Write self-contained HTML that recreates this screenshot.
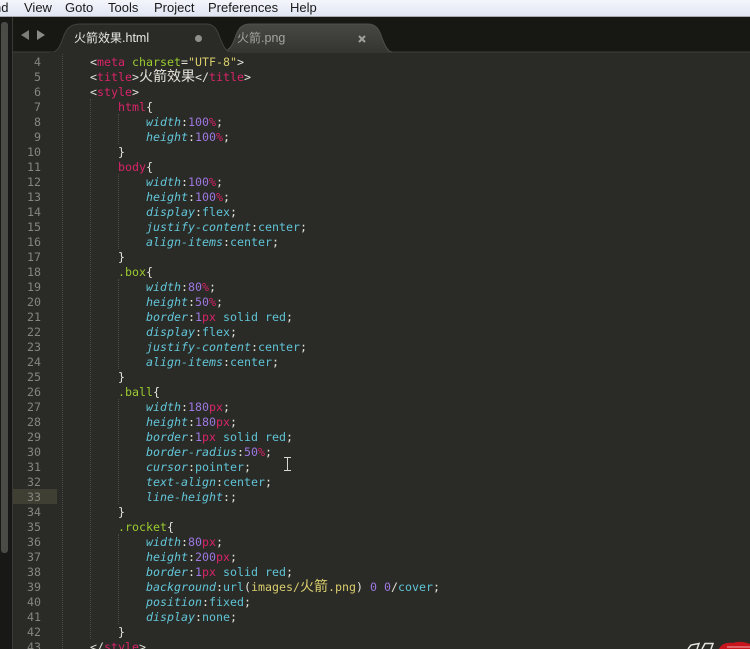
<!DOCTYPE html>
<html><head><meta charset="utf-8">
<style>
html,body{margin:0;padding:0;background:#2a2a26;}
#r{position:relative;width:750px;height:649px;overflow:hidden;background:#2a2a26;font-family:"DejaVu Sans Mono","Noto Sans CJK SC",monospace;}
.m{position:absolute;top:0;height:16px;font:13px/15px "Liberation Sans",sans-serif;color:#1a1a1a;white-space:pre;}
.l{position:absolute;left:0;margin-top:1px;height:15px;line-height:15px;font-size:11.63px;color:#e4e4dc;white-space:pre;}
.n{position:absolute;left:13px;margin-top:1px;width:28px;text-align:right;height:15px;line-height:15px;font-size:11.63px;color:#85867f;}
i{color:#62c6d8;font-style:italic}
b{font-weight:normal;color:#d9246a}
u{text-decoration:none;color:#9acb30}
s{text-decoration:none;color:#9c78e0}
q{quotes:none;color:#d8cd6c}
c{color:#5fc4d6}
em{font-style:normal;font-size:14px;font-family:"Noto Sans CJK SC",sans-serif;line-height:0}
.g{position:absolute;width:0;border-left:1px dotted #4a4a44}
</style></head><body><div id="r">
<div style="position:absolute;left:0;top:0;width:750px;height:17px;background:linear-gradient(#f4f6fb,#dfe4f3)"></div>
<div style="position:absolute;left:0;top:16px;width:750px;height:1px;background:#a9a9b0"></div>
<div class="m" style="left:-6px">nd</div>
<div class="m" style="left:24px">View</div>
<div class="m" style="left:65px">Goto</div>
<div class="m" style="left:108px">Tools</div>
<div class="m" style="left:154px">Project</div>
<div class="m" style="left:208px">Preferences</div>
<div class="m" style="left:290px">Help</div>

<div style="position:absolute;left:0;top:17px;width:13px;height:632px;background:#181816"></div>
<div style="position:absolute;left:1px;top:22px;width:7px;height:531px;background:#4a4a47;border-radius:3px"></div>
<div style="position:absolute;left:12px;top:17px;width:1px;height:632px;background:#3a3a37"></div>
<div style="position:absolute;left:13px;top:17px;width:737px;height:35px;background:#171714"></div>

<svg style="position:absolute;left:0;top:17px" width="750" height="37" viewBox="0 17 750 37">
<defs><linearGradient id="t2" x1="0" y1="0" x2="0" y2="1"><stop offset="0" stop-color="#474744"/><stop offset="1" stop-color="#353532"/></linearGradient></defs>
<path d="M13 52H750" stroke="#3f3f3b" stroke-width="1"/>
<path d="M220 52C229 52 232 46 235 38C238 29 241 24 250 24H368C376 24 379 29 382 38C385 46 388 52 392 52" fill="url(#t2)" stroke="#4f4f4b"/>
<path d="M50 53C58 52 60 46 63 38C66 29 70 24 80 24H206C214 24 217 29 220 38C223 46 226 52 232 53Z" fill="#2a2a26" stroke="#42423e"/>
<path d="M50 53H232" stroke="#2a2a26" stroke-width="2"/>
<path d="M21 35L29 30V40Z" fill="#7c7c78"/>
<path d="M37 30L45 35L37 40Z" fill="#8a8a86"/>
<circle cx="198.500" cy="38.500" r="3.500" fill="#8f8f8b"/>
<path d="M359 36L365 42M365 36L359 42" stroke="#a0a09c" stroke-width="2"/>
</svg>
<div style="position:absolute;left:74px;top:29px;font:12px/18px 'Noto Sans CJK SC',sans-serif;color:#e8e8e4;white-space:pre">火箭效果<span style="font:12.5px/18px 'Liberation Sans',sans-serif">.html</span></div>
<div style="position:absolute;left:237px;top:29px;font:12px/18px 'Noto Sans CJK SC',sans-serif;color:#a3a39f;white-space:pre">火箭<span style="font:12.5px/18px 'Liberation Sans',sans-serif">.png</span></div>

<div style="position:absolute;left:13px;top:489px;width:44px;height:15px;background:#403f34"></div>

<div class="g" style="left:62px;top:54px;height:595px"></div>
<div class="g" style="left:90px;top:99px;height:540px"></div>
<div class="g" style="left:118px;top:114px;height:30px"></div>
<div class="g" style="left:118px;top:174px;height:75px"></div>
<div class="g" style="left:118px;top:279px;height:90px"></div>
<div class="g" style="left:118px;top:399px;height:105px"></div>
<div class="g" style="left:118px;top:534px;height:90px"></div>

<div class="n" style="top:54px">4</div><div class="l" style="left:90px;top:54px">&lt;<b>meta</b> <u>charset</u>=<q>"UTF-8"</q>&gt;</div>
<div class="n" style="top:69px">5</div><div class="l" style="left:90px;top:69px">&lt;<b>title</b>&gt;<em>火箭效果</em>&lt;/<b>title</b>&gt;</div>
<div class="n" style="top:84px">6</div><div class="l" style="left:90px;top:84px">&lt;<b>style</b>&gt;</div>
<div class="n" style="top:99px">7</div><div class="l" style="left:118px;top:99px"><b>html</b>{</div>
<div class="n" style="top:114px">8</div><div class="l" style="left:146px;top:114px"><i>width</i>:<s>100</s><b>%</b>;</div>
<div class="n" style="top:129px">9</div><div class="l" style="left:146px;top:129px"><i>height</i>:<s>100</s><b>%</b>;</div>
<div class="n" style="top:144px">10</div><div class="l" style="left:118px;top:144px">}</div>
<div class="n" style="top:159px">11</div><div class="l" style="left:118px;top:159px"><b>body</b>{</div>
<div class="n" style="top:174px">12</div><div class="l" style="left:146px;top:174px"><i>width</i>:<s>100</s><b>%</b>;</div>
<div class="n" style="top:189px">13</div><div class="l" style="left:146px;top:189px"><i>height</i>:<s>100</s><b>%</b>;</div>
<div class="n" style="top:204px">14</div><div class="l" style="left:146px;top:204px"><i>display</i>:<c>flex</c>;</div>
<div class="n" style="top:219px">15</div><div class="l" style="left:146px;top:219px"><i>justify-content</i>:<c>center</c>;</div>
<div class="n" style="top:234px">16</div><div class="l" style="left:146px;top:234px"><i>align-items</i>:<c>center</c>;</div>
<div class="n" style="top:249px">17</div><div class="l" style="left:118px;top:249px">}</div>
<div class="n" style="top:264px">18</div><div class="l" style="left:118px;top:264px"><u>.box</u>{</div>
<div class="n" style="top:279px">19</div><div class="l" style="left:146px;top:279px"><i>width</i>:<s>80</s><b>%</b>;</div>
<div class="n" style="top:294px">20</div><div class="l" style="left:146px;top:294px"><i>height</i>:<s>50</s><b>%</b>;</div>
<div class="n" style="top:309px">21</div><div class="l" style="left:146px;top:309px"><i>border</i>:<s>1</s><b>px</b> <c>solid</c> <c>red</c>;</div>
<div class="n" style="top:324px">22</div><div class="l" style="left:146px;top:324px"><i>display</i>:<c>flex</c>;</div>
<div class="n" style="top:339px">23</div><div class="l" style="left:146px;top:339px"><i>justify-content</i>:<c>center</c>;</div>
<div class="n" style="top:354px">24</div><div class="l" style="left:146px;top:354px"><i>align-items</i>:<c>center</c>;</div>
<div class="n" style="top:369px">25</div><div class="l" style="left:118px;top:369px">}</div>
<div class="n" style="top:384px">26</div><div class="l" style="left:118px;top:384px"><u>.ball</u>{</div>
<div class="n" style="top:399px">27</div><div class="l" style="left:146px;top:399px"><i>width</i>:<s>180</s><b>px</b>;</div>
<div class="n" style="top:414px">28</div><div class="l" style="left:146px;top:414px"><i>height</i>:<s>180</s><b>px</b>;</div>
<div class="n" style="top:429px">29</div><div class="l" style="left:146px;top:429px"><i>border</i>:<s>1</s><b>px</b> <c>solid</c> <c>red</c>;</div>
<div class="n" style="top:444px">30</div><div class="l" style="left:146px;top:444px"><i>border-radius</i>:<s>50</s><b>%</b>;</div>
<div class="n" style="top:459px">31</div><div class="l" style="left:146px;top:459px"><i>cursor</i>:<c>pointer</c>;</div>
<div class="n" style="top:474px">32</div><div class="l" style="left:146px;top:474px"><i>text-align</i>:<c>center</c>;</div>
<div class="n" style="top:489px">33</div><div class="l" style="left:146px;top:489px"><i>line-height</i>:;</div>
<div class="n" style="top:504px">34</div><div class="l" style="left:118px;top:504px">}</div>
<div class="n" style="top:519px">35</div><div class="l" style="left:118px;top:519px"><u>.rocket</u>{</div>
<div class="n" style="top:534px">36</div><div class="l" style="left:146px;top:534px"><i>width</i>:<s>80</s><b>px</b>;</div>
<div class="n" style="top:549px">37</div><div class="l" style="left:146px;top:549px"><i>height</i>:<s>200</s><b>px</b>;</div>
<div class="n" style="top:564px">38</div><div class="l" style="left:146px;top:564px"><i>border</i>:<s>1</s><b>px</b> <c>solid</c> <c>red</c>;</div>
<div class="n" style="top:579px">39</div><div class="l" style="left:146px;top:579px"><i>background</i>:<c>url</c>(<q>images/<em>火箭</em>.png</q>) <s>0</s> <s>0</s>/<c>cover</c>;</div>
<div class="n" style="top:594px">40</div><div class="l" style="left:146px;top:594px"><i>position</i>:<c>fixed</c>;</div>
<div class="n" style="top:609px">41</div><div class="l" style="left:146px;top:609px"><i>display</i>:<c>none</c>;</div>
<div class="n" style="top:624px">42</div><div class="l" style="left:118px;top:624px">}</div>
<div class="n" style="top:639px">43</div><div class="l" style="left:90px;top:639px">&lt;/<b>style</b>&gt;</div>

<svg style="position:absolute;left:0;top:0" width="750" height="649">
<path d="M284 457.500H287.500M291 457.500H287.500V470.500M284 470.500H291" stroke="#d8d8d4" stroke-width="1" fill="none"/>
<path d="M688 649L691 645L699 643.500L697 649M702 649L705 643.500H713L711 649" stroke="#e2e2de" stroke-width="1.500" fill="none"/>
<path d="M719 649C721 644 727 642 733 643C738 641 746 642 750 644V649Z" fill="#c8141c"/>
<path d="M727 647H750" stroke="#efb0b0" stroke-width="1"/>
</svg>
</div></body></html>
